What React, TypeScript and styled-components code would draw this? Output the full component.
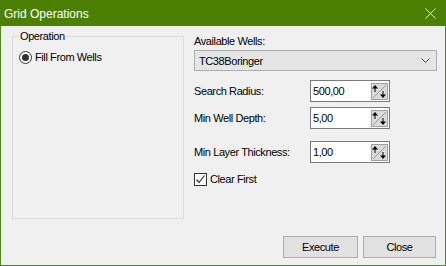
import React from "react";
import styled, { createGlobalStyle } from "styled-components";

const Global = createGlobalStyle`
  html, body { margin: 0; padding: 0; background: #f0f0f0; }
  body { font-family: "Liberation Sans", Arial, sans-serif; font-size: 11px; letter-spacing: -0.4px; color: #000; }
  * { box-sizing: border-box; }
`;

const Window = styled.div`
  width: 446px;
  height: 266px;
  display: flex;
  flex-direction: column;
  background: #f0f0f0;
  border: 1px solid #4f8a17;
  border-top: none;
`;

const TitleBar = styled.div`
  height: 26px;
  margin: 0 -1px;
  background: #4b8005;
  display: flex;
  align-items: center;
  justify-content: space-between;
  padding: 0 10px 0 4px;
  flex-shrink: 0;
`;

const Title = styled.span`
  color: #fff;
  font-size: 12px;
  letter-spacing: 0;
  padding-top: 1px;
`;

const Body = styled.div`
  flex: 1;
  display: flex;
  flex-direction: column;
`;

const Main = styled.div`
  display: flex;
  align-items: flex-start;
  padding: 8px 0 0 11px;
  gap: 10px;
`;

const GroupBox = styled.div`
  width: 172px;
  height: 183px;
  margin-top: 2px;
  border: 1px solid #dcdcdc;
  display: flex;
  flex-direction: column;
  align-items: flex-start;
`;

const Legend = styled.span`
  margin: -8px 0 0 6px;
  padding: 0 1px;
  line-height: 14px;
  background: #f0f0f0;
`;

const RadioRow = styled.label`
  display: flex;
  align-items: center;
  gap: 3px;
  margin: 7px 0 0 6px;
  line-height: 14px;
`;

const RadioCircle = styled.span`
  width: 13px;
  height: 13px;
  border-radius: 50%;
  border: 1px solid #333;
  background: #fff;
  display: flex;
  align-items: center;
  justify-content: center;
  &::after {
    content: "";
    width: 7px;
    height: 7px;
    border-radius: 50%;
    background: #333;
  }
`;

const RightColumn = styled.div`
  width: 243px;
  display: flex;
  flex-direction: column;
`;

const Label = styled.span`
  line-height: 14px;
`;

const Select = styled.div`
  margin-top: 2px;
  height: 21px;
  border: 1px solid #adadad;
  background: #e5e5e5;
  display: flex;
  align-items: center;
  justify-content: space-between;
  padding: 0 6px 0 4px;
`;

const FormRow = styled.div<{ $top: number }>`
  margin-top: ${(p) => p.$top}px;
  display: flex;
  align-items: center;
`;

const RowLabel = styled.span`
  width: 116px;
  line-height: 14px;
`;

const SpinBox = styled.div`
  width: 80px;
  height: 22px;
  border: 1px solid #7a7a7a;
  background: #fff;
  display: flex;
  align-items: center;
  justify-content: space-between;
  padding: 0 1px 0 2px;
`;

const CheckRow = styled.label`
  margin-top: 9px;
  display: flex;
  align-items: center;
  gap: 3px;
  line-height: 14px;
`;

const CheckBox = styled.span`
  width: 13px;
  height: 13px;
  border: 1px solid #333;
  background: #fff;
  display: flex;
  align-items: center;
  justify-content: center;
`;

const Footer = styled.div`
  margin-top: 17px;
  display: flex;
  justify-content: flex-end;
  gap: 5px;
  padding-right: 9px;
`;

const Button = styled.button<{ $w: number }>`
  width: ${(p) => p.$w}px;
  height: 22px;
  border: 1px solid #adadad;
  background: #e1e1e1;
  font-family: "Liberation Sans", Arial, sans-serif;
  font-size: 11px;
  letter-spacing: -0.4px;
  color: #000;
  padding: 0;
`;

const SpinIcon = () => (
  <svg width="17" height="17" viewBox="0 0 17 17">
    <rect x="0.5" y="0.5" width="16" height="16" fill="#dadada" stroke="#a0a0a0" />
    <line x1="2" y1="15" x2="15" y2="2" stroke="#9a9a9a" strokeWidth="1" />
    <path d="M4 2 L1 5.5 L3.5 5.5 L3.5 9 L4.5 9 L4.5 5.5 L7 5.5 Z" fill="#000" />
    <path d="M12 15 L9 11.5 L11.5 11.5 L11.5 8 L12.5 8 L12.5 11.5 L15 11.5 Z" fill="#000" />
  </svg>
);

const Spin = ({ value }: { value: string }) => (
  <SpinBox>
    <span>{value}</span>
    <SpinIcon />
  </SpinBox>
);

export default function App() {
  return (
    <>
      <Global />
      <Window>
        <TitleBar>
          <Title>Grid Operations</Title>
          <svg width="11" height="11" viewBox="0 0 11 11">
            <path d="M0.5 0.5 L10.5 10.5 M10.5 0.5 L0.5 10.5" stroke="#fff" strokeWidth="1" />
          </svg>
        </TitleBar>
        <Body>
          <Main>
            <GroupBox>
              <Legend>Operation</Legend>
              <RadioRow>
                <RadioCircle />
                Fill From Wells
              </RadioRow>
            </GroupBox>
            <RightColumn>
              <Label>Available Wells:</Label>
              <Select>
                <span>TC38Boringer</span>
                <svg width="9" height="5" viewBox="0 0 9 5">
                  <path d="M0.5 0.5 L4.5 4.5 L8.5 0.5" stroke="#444" fill="none" />
                </svg>
              </Select>
              <FormRow $top={9}>
                <RowLabel>Search Radius:</RowLabel>
                <Spin value="500,00" />
              </FormRow>
              <FormRow $top={5}>
                <RowLabel>Min Well Depth:</RowLabel>
                <Spin value="5,00" />
              </FormRow>
              <FormRow $top={12}>
                <RowLabel>Min Layer Thickness:</RowLabel>
                <Spin value="1,00" />
              </FormRow>
              <CheckRow>
                <CheckBox>
                  <svg width="11" height="11" viewBox="0 0 11 11">
                    <path d="M1.5 5.5 L4 8.5 L9.5 1.5" stroke="#333" fill="none" strokeWidth="1.2" />
                  </svg>
                </CheckBox>
                Clear First
              </CheckRow>
            </RightColumn>
          </Main>
          <Footer>
            <Button $w={75}>Execute</Button>
            <Button $w={73}>Close</Button>
          </Footer>
        </Body>
      </Window>
    </>
  );
}
